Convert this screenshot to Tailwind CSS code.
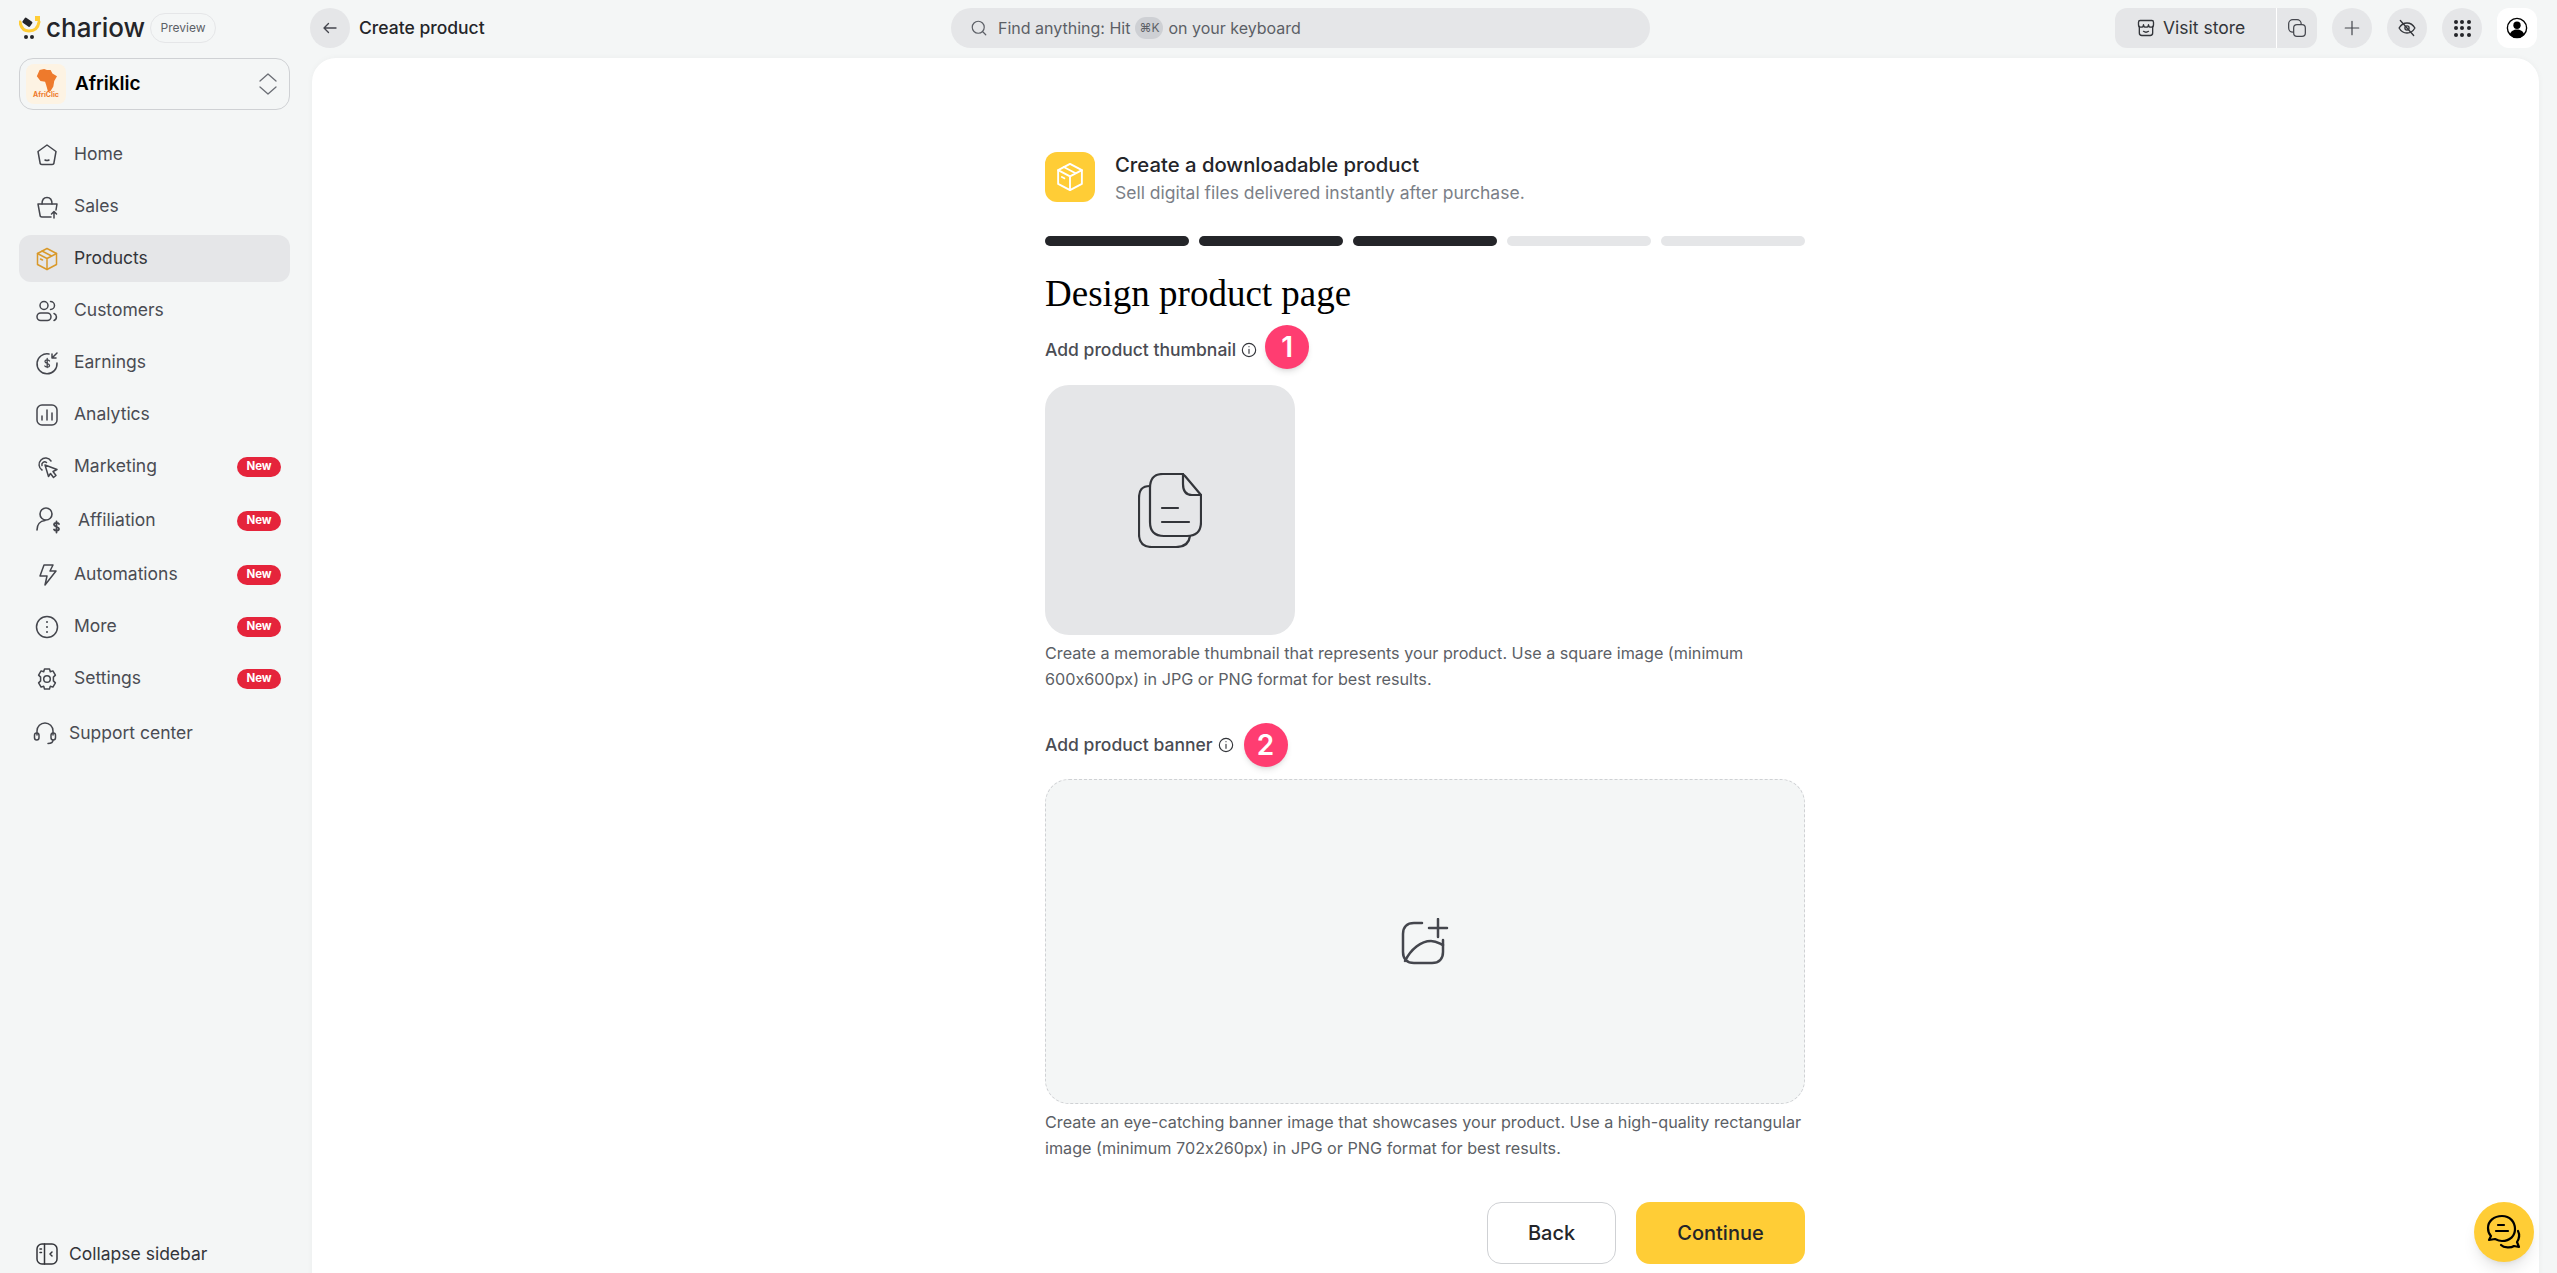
<!DOCTYPE html>
<html lang="en">
<head>
  <meta charset="UTF-8">
  <title>Create product – Chariow</title>
  <meta name="viewport" content="width=device-width, initial-scale=1.0"/>
  <script src="https://cdn.jsdelivr.net/npm/@tailwindcss/browser@4"></script>
</head>
<body class="bg-[#f4f6f6] text-[#242529] h-screen overflow-hidden font-['Inter',sans-serif]">

  <!-- Top bar -->
  <header class="h-[58px] flex items-start pt-2 pl-[19px] pr-5">
    <div class="w-[291px] h-10 flex items-center">
      <svg class="w-[22px] h-[24px] shrink-0" viewBox="0 0 22 24" fill="none">
        <path d="M1 6c1 6 4 9 9 9s9-3 10-9" stroke="#ffcd36" stroke-width="3" stroke-linecap="round"/>
        <rect x="4" y="3" width="9" height="6" rx="1" transform="rotate(35 8 6)" fill="#242529"/>
        <rect x="16" y="0" width="5" height="5" fill="#ffcd36"/>
        <circle cx="7" cy="21" r="2" fill="#242529"/>
        <circle cx="13" cy="21" r="2" fill="#242529"/>
      </svg>
      <span class="ml-[5px] w-[97px] text-[26px] leading-none font-medium">chariow</span>
      <span class="ml-[7px] h-[30px] w-[66px] rounded-full border border-[#e5e6e8] flex items-center justify-center text-[12px] text-[#5c5f66]">Preview</span>
    </div>
    <button class="w-10 h-10 rounded-full bg-[#e5e6e8] flex items-center justify-center">
      <svg class="w-[18px] h-[18px]" viewBox="0 0 24 24" fill="none" stroke="#44464d" stroke-width="1.8" stroke-linecap="round" stroke-linejoin="round"><path d="M20 12H5M10 6l-6 6 6 6"/></svg>
    </button>
    <span class="ml-[9px] w-[132px] h-10 leading-10 text-[17.5px] font-medium">Create product</span>
    <div class="ml-[460px] w-[699px] h-10 rounded-full bg-[#e5e6e8] flex items-center pl-[19px] text-[16px] text-[#5c5f66]">
      <svg class="w-[18px] h-[18px] mr-[10px]" viewBox="0 0 24 24" fill="none" stroke="#5c5f66" stroke-width="1.6" stroke-linecap="round"><circle cx="11" cy="11" r="8"/><path d="M17 17l4 4"/></svg>
      <span>Find anything: Hit</span>
      <span class="mx-[5px] w-7 h-[22px] rounded-full bg-[#ced0d4] flex items-center justify-center text-[12px]">⌘K</span>
      <span>on your keyboard</span>
    </div>
    <div class="ml-auto flex items-center">
      <div class="flex h-10 rounded-xl bg-[#e5e6e8] overflow-hidden">
        <div class="w-[161px] flex items-center pl-[21px] gap-[7px] text-[17.5px] text-[#33353a]">
          <svg class="w-[20px] h-[20px]" viewBox="0 0 24 24" fill="none" stroke="#33353a" stroke-width="1.6" stroke-linecap="round" stroke-linejoin="round"><path d="M4 10v8a3 3 0 0 0 3 3h10a3 3 0 0 0 3-3v-8"/><path d="M5 3h14a2 2 0 0 1 2 2v3a3 3 0 0 1-6 0 3 3 0 0 1-6 0 3 3 0 0 1-6 0V5a2 2 0 0 1 2-2z"/><path d="M9 16c2 1.500 4 1.500 6 0"/></svg>
          <span>Visit store</span>
        </div>
        <div class="w-[41px] border-l border-white flex items-center justify-center">
          <svg class="w-[20px] h-[20px]" viewBox="0 0 24 24" fill="none" stroke="#44464d" stroke-width="1.5"><rect x="2" y="2" width="15" height="15" rx="5"/><rect x="8" y="8" width="14" height="14" rx="4" fill="#e5e6e8"/></svg>
        </div>
      </div>
      <button class="ml-[15px] w-10 h-10 rounded-full bg-[#e5e6e8] flex items-center justify-center">
        <svg class="w-[18px] h-[18px]" viewBox="0 0 24 24" fill="none" stroke="#44464d" stroke-width="1.6" stroke-linecap="round"><path d="M12 3v18M3 12h18"/></svg>
      </button>
      <button class="ml-[15px] w-10 h-10 rounded-full bg-[#e5e6e8] flex items-center justify-center">
        <svg class="w-[20px] h-[20px]" viewBox="0 0 24 24" fill="none" stroke="#33353a" stroke-width="1.6" stroke-linecap="round" stroke-linejoin="round"><path d="M2.500 12S6 6 12 6s9.500 6 9.500 6-3.500 6-9.500 6-9.500-6-9.500-6z"/><circle cx="12" cy="12" r="2.500"/><path d="M4 3l16 18"/></svg>
      </button>
      <button class="ml-[15px] w-10 h-10 rounded-full bg-[#e5e6e8] grid grid-cols-[4px_4px_4px] place-content-center gap-[2.500px]">
        <span class="w-[4px] h-[4px] rounded-full bg-[#242529]"></span><span class="w-[4px] h-[4px] rounded-full bg-[#242529]"></span><span class="w-[4px] h-[4px] rounded-full bg-[#242529]"></span>
        <span class="w-[4px] h-[4px] rounded-full bg-[#242529]"></span><span class="w-[4px] h-[4px] rounded-full bg-[#242529]"></span><span class="w-[4px] h-[4px] rounded-full bg-[#242529]"></span>
        <span class="w-[4px] h-[4px] rounded-full bg-[#242529]"></span><span class="w-[4px] h-[4px] rounded-full bg-[#242529]"></span><span class="w-[4px] h-[4px] rounded-full bg-[#242529]"></span>
      </button>
      <button class="ml-[15px] w-10 h-10 rounded-xl bg-white flex items-center justify-center">
        <svg class="w-[22px] h-[22px]" viewBox="0 0 24 24"><circle cx="12" cy="12" r="10.500" fill="none" stroke="#000" stroke-width="1.500"/><circle cx="12" cy="9" r="4" fill="#000"/><path d="M4 19c1.500-4 4.500-5.500 8-5.500s6.500 1.500 8 5.500c-2 2.500-5 4-8 4s-6-1.500-8-4z" fill="#000"/></svg>
      </button>
    </div>
  </header>

  <div class="flex h-[1215px]">
    <!-- Sidebar -->
    <aside class="w-[312px] h-full shrink-0 pl-[19px] pr-[22px] flex flex-col text-[17.5px] text-[#4a4c53]">
      <div class="h-[52px] rounded-[14px] border border-[#cfd1d4] flex items-center pl-[6px] pr-[11px]">
        <div class="w-10 h-10 rounded-lg bg-[#fdf3e3] flex flex-col items-center justify-center">
          <svg class="w-[24px] h-[22px]" viewBox="0 0 26 24"><path d="M6 1l5-1 3 1 4 0 2 4 5 3-3 5-1 6-3 5h-3l-2-7-1-3-5-1-4-5z" fill="#ee7a2c"/></svg>
          <span class="text-[7px] leading-[8px] font-bold text-[#ee7a2c]">AfriClic</span>
        </div>
        <span class="ml-[9px] text-[19px] font-semibold text-black">Afriklic</span>
        <svg class="ml-auto w-[20px] h-[24px]" viewBox="0 0 20 24" fill="none" stroke="#6b6e75" stroke-width="1.300" stroke-linecap="round" stroke-linejoin="round"><path d="M2 9l8-7 8 7M2 15l8 7 8-7"/></svg>
      </div>

      <nav class="mt-[21px] flex flex-col gap-[5px]">
        <a class="h-[47px] flex items-center pl-[16px] gap-[15px]">
          <svg class="w-6 h-6" viewBox="0 0 24 24" fill="none" stroke="#44464d" stroke-width="1.500" stroke-linecap="round" stroke-linejoin="round"><path d="M12 2l9 6.500-2 11a2 2 0 0 1-2 2H7a2 2 0 0 1-2-2l-2-11z"/><path d="M10 17c1.300.7 2.700.7 4 0"/></svg>
          <span>Home</span>
        </a>
        <a class="h-[47px] flex items-center pl-[16px] gap-[15px]">
          <svg class="w-6 h-6" viewBox="0 0 24 24" fill="none" stroke="#44464d" stroke-width="1.500" stroke-linecap="round" stroke-linejoin="round"><path d="M16 22H7a2 2 0 0 1-2-2L3 9h19l-1 6"/><path d="M7 9c0-4 2-6.500 5-6.500s5 2.500 5 6.500"/><path d="M19 23v-6M16.500 19l2.500-2.500 2.500 2.500"/></svg>
          <span>Sales</span>
        </a>
        <a class="h-[47px] flex items-center pl-[16px] gap-[15px] rounded-[12px] bg-[#e5e6e8] text-[#33353a]">
          <svg class="w-6 h-6" viewBox="0 0 24 24" fill="none" stroke="#d9992a" stroke-width="1.500" stroke-linecap="round" stroke-linejoin="round"><path d="M12 1.500l9.500 5v11L12 22.500l-9.500-5v-11z"/><path d="M2.500 6.500L12 11.500l9.500-5M12 11.500v11M7 4l9.500 5M5.500 12l2 1"/></svg>
          <span>Products</span>
        </a>
        <a class="h-[47px] flex items-center pl-[16px] gap-[15px]">
          <svg class="w-6 h-6" viewBox="0 0 24 24" fill="none" stroke="#44464d" stroke-width="1.500" stroke-linecap="round" stroke-linejoin="round"><circle cx="9" cy="6.500" r="4"/><path d="M15.500 2.500a4 4 0 0 1 0 8"/><rect x="2" y="14" width="14" height="7.500" rx="3.700"/><path d="M19 14.500c3 1 3.500 5.500 0 7"/></svg>
          <span>Customers</span>
        </a>
        <a class="h-[47px] flex items-center pl-[16px] gap-[15px]">
          <svg class="w-6 h-6" viewBox="0 0 24 24" fill="none" stroke="#44464d" stroke-width="1.500" stroke-linecap="round" stroke-linejoin="round"><path d="M14 3a10 10 0 1 0 8 9"/><path d="M22 2l-5 5M17 3v4h4"/><path d="M14.500 10c-.5-1.300-4.500-2-4.500.5s4.500 1.500 4.500 4-4 1.800-4.700.5M12.200 7.500v9" stroke-width="1.300"/></svg>
          <span>Earnings</span>
        </a>
        <a class="h-[47px] flex items-center pl-[16px] gap-[15px]">
          <svg class="w-6 h-6" viewBox="0 0 24 24" fill="none" stroke="#44464d" stroke-width="1.500" stroke-linecap="round"><rect x="2" y="2" width="20" height="20" rx="5"/><path d="M7 13v4M12 7v10M17 10v7"/></svg>
          <span>Analytics</span>
        </a>
        <a class="h-[47px] flex items-center pl-[16px] gap-[15px]">
          <svg class="w-6 h-6" viewBox="0 0 24 24" fill="none" stroke="#44464d" stroke-width="1.500" stroke-linecap="round" stroke-linejoin="round"><path d="M7 15A6.500 6.500 0 1 1 16 6"/><path d="M7 10.500A2.800 2.800 0 0 1 11.500 7.500"/><path d="M10 10l12 4.500-4 2 3 4-2.500 2-3-4-2 3z"/></svg>
          <span>Marketing</span>
          <span class="ml-auto mr-[9px] w-11 h-5 rounded-full bg-[#e5243b] text-white text-[11.5px] font-bold flex items-center justify-center">New</span>
        </a>
        <a class="h-[51px] flex items-center pl-[16px] gap-[15px]">
          <svg class="w-[28px] h-[28px]" viewBox="0 0 28 28" fill="none" stroke="#44464d" stroke-width="1.600" stroke-linecap="round" stroke-linejoin="round"><circle cx="11" cy="7" r="6"/><path d="M2 23c0-5 3-9 8-9.500"/><path d="M24 17c-1-1.500-5-1.500-5 .8s5 1.700 5 4-4 2.400-5 .7M21.500 14.500v11" stroke-width="1.800"/></svg>
          <span>Affiliation</span>
          <span class="ml-auto mr-[9px] w-11 h-5 rounded-full bg-[#e5243b] text-white text-[11.5px] font-bold flex items-center justify-center">New</span>
        </a>
        <a class="h-[47px] flex items-center pl-[16px] gap-[15px]">
          <svg class="w-6 h-6" viewBox="0 0 24 24" fill="none" stroke="#44464d" stroke-width="1.500" stroke-linecap="round" stroke-linejoin="round"><path d="M9 2h9l-3 6h6L10 22l2-9H5z"/></svg>
          <span>Automations</span>
          <span class="ml-auto mr-[9px] w-11 h-5 rounded-full bg-[#e5243b] text-white text-[11.5px] font-bold flex items-center justify-center">New</span>
        </a>
        <a class="h-[47px] flex items-center pl-[16px] gap-[15px]">
          <svg class="w-6 h-6" viewBox="0 0 24 24" fill="none" stroke="#44464d" stroke-width="1.500" stroke-linecap="round"><circle cx="12" cy="12" r="10.500"/><path d="M12 7v.1M12 12v.1M12 17v.1" stroke-width="2"/></svg>
          <span>More</span>
          <span class="ml-auto mr-[9px] w-11 h-5 rounded-full bg-[#e5243b] text-white text-[11.5px] font-bold flex items-center justify-center">New</span>
        </a>
        <a class="h-[47px] flex items-center pl-[16px] gap-[15px]">
          <svg class="w-6 h-6" viewBox="0 0 24 24" fill="none" stroke="#44464d" stroke-width="1.500" stroke-linecap="round" stroke-linejoin="round"><circle cx="12" cy="12" r="3.300"/><path d="M9.500 2h5l.8 2.800 2.600-.9 2.500 4.200-2 2 0 3.800 2 2-2.500 4.200-2.600-.9-.8 2.800h-5l-.8-2.800-2.600.9L3.600 15.900l2-2 0-3.800-2-2 2.500-4.200 2.600.9z"/></svg>
          <span>Settings</span>
          <span class="ml-auto mr-[9px] w-11 h-5 rounded-full bg-[#e5243b] text-white text-[11.5px] font-bold flex items-center justify-center">New</span>
        </a>
        <a class="h-[52px] flex items-center pl-[14px] gap-[12px]">
          <svg class="w-6 h-6" viewBox="0 0 24 24" fill="none" stroke="#44464d" stroke-width="1.500" stroke-linecap="round" stroke-linejoin="round"><path d="M4 14V10a8 8 0 0 1 16 0v4"/><rect x="1.500" y="12" width="4.500" height="7" rx="2.200"/><rect x="18" y="12" width="4.500" height="7" rx="2.200"/><path d="M20 19c0 2.500-2 3.500-5 3.500"/></svg>
          <span>Support center</span>
        </a>
      </nav>

      <a class="mt-auto h-[38px] flex items-center pl-[16px] gap-[10px] text-[#33353a]">
        <svg class="w-6 h-6" viewBox="0 0 24 24" fill="none" stroke="#33353a" stroke-width="1.500" stroke-linecap="round" stroke-linejoin="round"><rect x="2" y="2" width="20" height="20" rx="5"/><path d="M9.500 2v20M5 7h1.500M5 10.500h1.500M17 10l-2 2 2 2"/></svg>
        <span>Collapse sidebar</span>
      </a>
    </aside>

    <!-- Main panel -->
    <main class="w-[2227px] h-[1240px] bg-white rounded-[24px] shadow-[0_0_6px_rgba(0,0,0,0.04)] pt-[94px] relative">
      <div class="ml-[733px] w-[760px]">
        <div class="flex items-start gap-5">
          <div class="w-[50px] h-[50px] rounded-xl bg-[#ffcd36] flex items-center justify-center">
            <svg class="w-[30px] h-[30px]" viewBox="0 0 24 24" fill="none" stroke="#fff" stroke-width="1.500" stroke-linecap="round" stroke-linejoin="round"><path d="M12 1.500l9.500 5v11L12 22.500l-9.500-5v-11z"/><path d="M2.500 6.500L12 11.500l9.500-5M12 11.500v11M7 4l9.500 5M5.500 12l2 1"/></svg>
          </div>
          <div class="h-[50px]">
            <h2 class="text-[20.300px] leading-[26px] font-medium">Create a downloadable product</h2>
            <p class="mt-[3px] text-[17.5px] leading-[24px] text-[#7b7f87]">Sell digital files delivered instantly after purchase.</p>
          </div>
        </div>

        <div class="mt-[34px] flex gap-[10px]">
          <div class="w-[144px] h-[10px] rounded-full bg-[#242529]"></div>
          <div class="w-[144px] h-[10px] rounded-full bg-[#242529]"></div>
          <div class="w-[144px] h-[10px] rounded-full bg-[#242529]"></div>
          <div class="w-[144px] h-[10px] rounded-full bg-[#e5e6e8]"></div>
          <div class="w-[144px] h-[10px] rounded-full bg-[#e5e6e8]"></div>
        </div>

        <h1 class="mt-[25px] text-[37px] leading-[46px] text-black font-['Liberation_Serif',serif]">Design product page</h1>

        <div class="mt-[8px] h-11 flex items-center">
          <span class="mt-[6px] text-[17.5px] font-medium text-[#4a4c53]">Add product thumbnail</span>
          <svg class="mt-[6px] ml-[5px] w-4 h-4" viewBox="0 0 24 24" fill="none" stroke="#33353a" stroke-width="1.700" stroke-linecap="round"><circle cx="12" cy="12" r="10"/><path d="M12 11v6M12 7v.1"/></svg>
          <span class="ml-[8px] w-11 h-11 rounded-full bg-[#ff3d71] text-white text-[28px] font-semibold flex items-center justify-center shadow-md">1</span>
        </div>

        <div class="mt-[16px] w-[250px] h-[250px] rounded-[24px] bg-[#e5e6e8] flex items-center justify-center">
          <svg class="w-[64px] h-[75px]" viewBox="0 0 64 75" fill="none" stroke="#33353a" stroke-width="2.200" stroke-linecap="round" stroke-linejoin="round">
            <path d="M12 13C4 13 1 17 1 25v36c0 9 4 13 13 13h24c7 0 13-3 14-11"/>
            <path d="M44 1H25C16 1 12 6 12 15v34c0 9 4 14 14 14h23c10 0 14-5 14-14V22L47 3c-1-1-2-2-3-2z" fill="#e5e6e8"/>
            <path d="M45 1v10c0 7 3 11 9 11h9"/>
            <path d="M24 35h16M24 49h27"/>
          </svg>
        </div>

        <p class="mt-[5px] text-[16.2px] leading-[26px] text-[#5c5f66] [font-feature-settings:'calt'_0]">Create a memorable thumbnail that represents your product. Use a square image (minimum<br>600x600px) in JPG or PNG format for best results.</p>

        <div class="mt-[31px] h-11 flex items-center">
          <span class="text-[17.5px] font-medium text-[#4a4c53]">Add product banner</span>
          <svg class="ml-[5px] w-4 h-4" viewBox="0 0 24 24" fill="none" stroke="#33353a" stroke-width="1.700" stroke-linecap="round"><circle cx="12" cy="12" r="10"/><path d="M12 11v6M12 7v.1"/></svg>
          <span class="ml-[10px] w-11 h-11 rounded-full bg-[#ff3d71] text-white text-[28px] font-semibold flex items-center justify-center shadow-md">2</span>
        </div>

        <div class="mt-[12px] h-[325px] rounded-[24px] border border-dashed border-[#cfd1d4] bg-[#f4f6f6] flex items-center justify-center">
          <svg class="w-[48px] h-[48px]" viewBox="2 -1 48 48" fill="none" stroke="#44464d" stroke-width="2.500" stroke-linecap="round" stroke-linejoin="round">
            <path d="M23 4h-8C8 4 4 8 4 15v18c0 7 4 11 11 11h18c7 0 11-4 11-11V21"/>
            <path d="M30 9h18M39 0v18"/>
            <path d="M6 42c6-12 16-20 26-20 6 0 9 3 12 4"/>
          </svg>
        </div>

        <p class="mt-[5px] text-[16.2px] leading-[26px] text-[#5c5f66] [font-feature-settings:'calt'_0]">Create an eye-catching banner image that showcases your product. Use a high-quality rectangular<br>image (minimum 702x260px) in JPG or PNG format for best results.</p>

        <div class="mt-[41px] flex justify-end gap-5">
          <button class="w-[129px] h-[62px] rounded-[14px] border border-[#cfd1d4] bg-white text-[20px] font-medium">Back</button>
          <button class="w-[169px] h-[62px] rounded-[14px] bg-[#ffcd36] text-[20px] font-medium">Continue</button>
        </div>
      </div>

      <!-- Chat launcher floats over the page -->
      <button class="absolute left-[2162px] top-[1144px] w-[60px] h-[60px] rounded-full bg-[#ffcd36] shadow-lg flex items-center justify-center">
        <svg class="w-[36px] h-[36px]" viewBox="0 0 36 36" fill="none" stroke="#000" stroke-width="2.200" stroke-linecap="round" stroke-linejoin="round">
          <path d="M16 2C8 2 2 7 2 14c0 3 1 6 3 8l-2 4 6-1c2 1 4 2 7 2 8 0 13-5 13-12S24 2 16 2z"/>
          <path d="M12 11h6M10 17h12"/>
          <path d="M32 17c2 4 1 8-1 11l2 5-5-1c-3 2-10 2-13-1"/>
        </svg>
      </button>
    </main>
  </div>
</body>
</html>
